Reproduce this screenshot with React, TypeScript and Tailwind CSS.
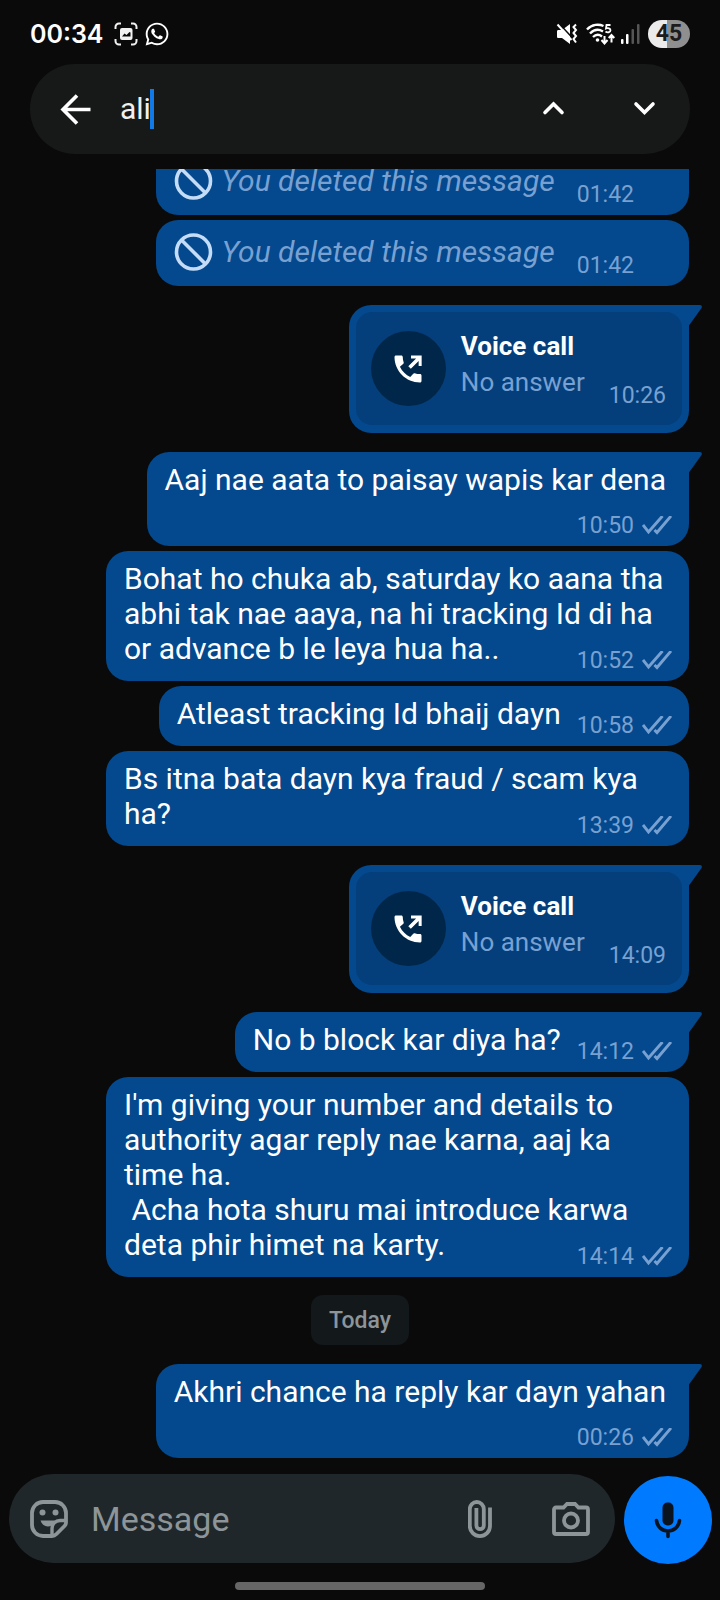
import { useState } from "react";
import { FaWhatsapp } from "react-icons/fa";

type Message =
  | { kind: "deleted"; time: string }
  | { kind: "call"; time: string; title: string; status: string }
  | { kind: "day"; label: string }
  | {
      kind: "text";
      time: string;
      text: string;
      meta: "inline" | "below" | "float";
      tail?: boolean;
    };

const messages: Message[] = [
  { kind: "deleted", time: "01:42" },
  { kind: "deleted", time: "01:42" },
  { kind: "call", title: "Voice call", status: "No answer", time: "10:26" },
  {
    kind: "text",
    text: "Aaj nae aata to paisay wapis kar dena",
    time: "10:50",
    meta: "below",
    tail: true,
  },
  {
    kind: "text",
    text: "Bohat ho chuka ab, saturday ko aana tha abhi tak nae aaya, na hi tracking Id di ha or advance b le leya hua ha..",
    time: "10:52",
    meta: "float",
  },
  {
    kind: "text",
    text: "Atleast tracking Id bhaij dayn",
    time: "10:58",
    meta: "inline",
  },
  {
    kind: "text",
    text: "Bs itna bata dayn kya fraud / scam kya ha?",
    time: "13:39",
    meta: "float",
  },
  { kind: "call", title: "Voice call", status: "No answer", time: "14:09" },
  {
    kind: "text",
    text: "No b block kar diya ha?",
    time: "14:12",
    meta: "inline",
    tail: true,
  },
  {
    kind: "text",
    text: "I'm giving your number and details to authority agar reply nae karna, aaj ka time ha.\n Acha hota shuru mai introduce karwa deta phir himet na karty.",
    time: "14:14",
    meta: "float",
  },
  { kind: "day", label: "Today" },
  {
    kind: "text",
    text: "Akhri chance ha reply kar dayn yahan",
    time: "00:26",
    meta: "below",
    tail: true,
  },
];

const metaClass = {
  inline: "ml-[10px]",
  below: "mt-[10px]",
  float: "float-right mt-[18px] -mr-[6px]",
};

const Tail = () => (
  <svg
    className="absolute top-0 -right-[13px] w-[14px] h-[21px]"
    viewBox="0 0 14 21"
    fill="#04488e"
  >
    <path d="M0 0H12c2 0 2.4 2 1.2 3.5L1 20.5V21H0z" />
  </svg>
);

const Meta = ({ msg }: { msg: Extract<Message, { kind: "text" }> }) => (
  <span
    className={`flex items-center self-end gap-2 text-[23px] leading-6 text-[#78a1d1] ${metaClass[msg.meta]}`}
  >
    <span>{msg.time}</span>
    <svg
      className="w-[30px] h-[20px]"
      viewBox="0 0 30 20"
      fill="none"
      stroke="#78a1d1"
      strokeWidth="2.9"
    >
      <path d="M1 9l5.500 7L20.500 0M12.500 14l2.500 2.500L29 0" />
    </svg>
  </span>
);

const Deleted = ({ time }: { time: string }) => (
  <div className="self-end flex items-end bg-[#04488e] rounded-[22px] pt-3 pb-2 pl-[18px] pr-[55px]">
    <div className="flex items-center h-[39px] mb-[7px] gap-[9px]">
      <svg
        className="w-[39px] h-[39px]"
        viewBox="0 0 39 39"
        fill="none"
        stroke="#c5dcf7"
        strokeWidth="3.600"
      >
        <circle cx="19.5" cy="20" r="17" />
        <path d="M7.500 8l24 24" />
      </svg>
      <p className="text-[30px] leading-[35px] italic text-[#78a1d1]">
        You deleted this message
      </p>
    </div>
    <span className="ml-[22px] text-[23px] leading-6 text-[#78a1d1]">
      {time}
    </span>
  </div>
);

const Call = ({
  title,
  status,
  time,
}: {
  title: string;
  status: string;
  time: string;
}) => (
  <div className="relative self-end mt-[14px] bg-[#04488e] rounded-[22px] rounded-tr-none p-[7px] pb-2">
    <Tail />
    <div className="flex items-start bg-[#043f7c] rounded-2xl h-[113px] pl-[15px] pr-4 pt-4">
      <div className="w-[75px] h-[75px] mt-[3px] rounded-full bg-[#00264a] flex items-center justify-center">
        <svg className="w-9 h-9" viewBox="0 0 24 24" fill="#fff">
          <path d="M20 15.400c-1.200 0-2.400-.2-3.500-.6-.4-.1-.8 0-1 .3l-2 2.300c-2.900-1.400-5.500-4-6.900-6.900l2.300-2c.3-.3.4-.7.2-1-.4-1.100-.6-2.300-.6-3.500 0-.6-.4-1-1-1H4c-.6 0-1 .4-1 1C3 13.300 10.700 21 20 21c.6 0 1-.4 1-1v-3.600c0-.6-.4-1-1-1z" />
          <path d="M14 3v2h3.400l-5.200 5.200 1.700 1.700 5.200-5.300V10h2V3z" />
        </svg>
      </div>
      <div className="ml-[15px]">
        <p className="text-[26px] leading-9 font-bold text-white">{title}</p>
        <p className="text-[26px] leading-9 text-[#78a1d1]">{status}</p>
      </div>
      <span className="ml-6 mt-14 text-[23px] leading-6 text-[#78a1d1]">
        {time}
      </span>
    </div>
  </div>
);

const Bubble = ({ msg }: { msg: Extract<Message, { kind: "text" }> }) => (
  <div
    className={`relative self-end flex max-w-[583px] bg-[#04488e] rounded-[22px] pt-[10px] pb-2 pl-[18px] pr-[17px] ${
      msg.meta === "inline" ? "items-end" : "flex-col"
    } ${msg.tail ? "mt-[14px] rounded-tr-none" : ""}`}
  >
    {msg.tail && <Tail />}
    <p
      className={`mr-[6px] text-[30px] leading-[35px] text-white whitespace-pre-wrap ${
        msg.meta === "float" ? "" : "mb-[7px]"
      }`}
    >
      {msg.text}
      {msg.meta === "float" && <Meta msg={msg} />}
    </p>
    {msg.meta !== "float" && <Meta msg={msg} />}
  </div>
);

const StatusBar = () => (
  <div className="flex items-center h-16 pt-[3px] px-[30px] text-white">
    <span className="font-[Inter,sans-serif] text-[25px] leading-8 font-semibold">
      00:34
    </span>
    <svg
      className="ml-[10px] w-6 h-6"
      viewBox="0 0 24 24"
      fill="none"
      stroke="#f2f2f2"
      strokeWidth="2"
    >
      <path d="M1.500 7V5a3.500 3.500 0 0 1 3.500-3.500h2M17 1.500h2A3.500 3.500 0 0 1 22.500 5v2M22.500 17v2a3.500 3.500 0 0 1-3.500 3.500h-2M7 22.500H5A3.500 3.500 0 0 1 1.500 19v-2" />
      <rect x="6" y="6" width="12.500" height="12" rx="2" fill="#f2f2f2" stroke="none" />
      <path
        d="M8 14.500l2.500-3 2 1.500 3-3 1 .5v4z"
        fill="#0a0a0a"
        stroke="none"
      />
    </svg>
    <FaWhatsapp className="ml-[6px] w-[26px] h-[26px]" />
    <div className="ml-auto flex items-center">
      {/* muted + vibrate */}
      <svg className="w-[22px] h-[22px]" viewBox="0 0 22 22" fill="none">
        <path d="M1 8.500C1 7.500 1.500 7 2.500 7H6l8-6v20l-8-6H2.500C1.500 15 1 14.500 1 13.500z" fill="#fff" />
        <path d="M3 .5l14 15" stroke="#0a0a0a" strokeWidth="1.600" />
        <path d="M1.500 1.500l14 15.500" stroke="#fff" strokeWidth="2" />
        <path d="M20 1.500l-2.500 2.500 2.500 3-2.500 3 2.500 3-2.500 3 2.500 3.500" stroke="#fff" strokeWidth="2" />
      </svg>
      {/* wifi */}
      <svg className="ml-2 w-[29px] h-[22px]" viewBox="0 0 29 22" fill="none" stroke="#fff">
        <path d="M1 6.500C6 1 13 1 17.500 3M4 10.500c4-4 9-4.500 13-2M7 14c2.500-2.500 6-3 9-.5" strokeWidth="2.400" />
        <circle cx="11.500" cy="17" r="1.800" fill="#fff" stroke="none" />
        <path d="M24.500 2h-4l-.5 3.500c2-.8 4.500-.3 4.500 1.800s-3 2.700-5 1.200" strokeWidth="1.800" />
        <path d="M18.500 13v7M15.500 17l3 3.500 3-3.500M25.500 19.500v-7M22.700 15l2.800-3 2.800 3" strokeWidth="2" />
      </svg>
      {/* signal */}
      <svg className="ml-[6px] w-[19px] h-[20px]" viewBox="0 0 19 20">
        <rect x="0" y="15" width="2.500" height="5" rx="1" fill="#fff" />
        <rect x="5" y="10" width="2.500" height="10" rx="1" fill="#fff" />
        <rect x="10.500" y="5" width="2.500" height="15" rx="1" fill="#555" />
        <rect x="16" y="0" width="2.500" height="20" rx="1" fill="#555" />
      </svg>
      <div className="ml-2 w-[42px] h-7 rounded-full bg-linear-to-r from-[#ebebeb] from-45% to-[#8f8f8f] to-45% flex items-center justify-center text-[23px] leading-7 font-bold text-[#1c1c1c]">
        45
      </div>
    </div>
  </div>
);

const SearchBar = () => {
  const [query, setQuery] = useState("ali");

  return (
    <div className="flex items-center h-[90px] mx-[30px] pl-[30px] pr-[34px] rounded-full bg-[#171918]">
      <button aria-label="Back">
        <svg className="w-8 h-8" viewBox="0 0 32 32" fill="none" stroke="#fff" strokeWidth="3.600">
          <path d="M17 2.500L3 16.500l14 14M3 16.500h27.500" />
        </svg>
      </button>
      <div className="ml-7 flex flex-1 items-center">
        <input
          aria-label="Search"
          className="field-sizing-content text-[30px] leading-10 text-[#f0f0f0] outline-none bg-transparent"
          value={query}
          onChange={(e) => setQuery(e.target.value)}
        />
        <span className="-ml-px w-1 h-10 bg-[#1279e8]" />
      </div>
      <button aria-label="Previous result">
        <svg className="w-6 h-6" viewBox="0 0 24 24" fill="none" stroke="#fff" strokeWidth="3.600" strokeLinecap="round">
          <path d="M4 15.500L12.500 7l8.500 8.500" />
        </svg>
      </button>
      <button aria-label="Next result" className="ml-[67px]">
        <svg className="w-6 h-6" viewBox="0 0 24 24" fill="none" stroke="#fff" strokeWidth="3.600" strokeLinecap="round">
          <path d="M4 7l8.500 8.500L21 7" />
        </svg>
      </button>
    </div>
  );
};

const Composer = () => (
  <div className="flex items-center gap-[9px] pl-[9px] pr-2">
    <div className="flex flex-1 min-w-0 items-center h-[89px] rounded-full bg-[#20272b] pl-[21px] pr-[25px]">
      <button aria-label="Stickers">
        <svg className="w-[38px] h-[38px]" viewBox="0 0 38 38" fill="none" stroke="#8d9598" strokeWidth="3.800">
          <path d="M13 2h12a11 11 0 0 1 11 11v9.500c0 1.500-.5 2.500-1.500 3.500l-8 8c-1.200 1.200-2.500 2-4.500 2h-9A11 11 0 0 1 2 25V13A11 11 0 0 1 13 2z" />
          <path d="M36 20.500h-6a8 8 0 0 0-8 8V36" strokeWidth="3.400" />
          <circle cx="12.500" cy="12.500" r="3" fill="#8d9598" stroke="none" />
          <circle cx="25.500" cy="12.500" r="3" fill="#8d9598" stroke="none" />
          <path d="M10.500 20.500h15c-1.500 4-4 6-7.500 6s-6-2-7.500-6z" fill="#8d9598" stroke="none" />
        </svg>
      </button>
      <input
        aria-label="Message"
        placeholder="Message"
        className="ml-[23px] flex-1 min-w-0 text-[34px] leading-10 text-white placeholder:text-[#8d9598] outline-none bg-transparent"
      />
      <button aria-label="Attach">
        <svg className="w-6 h-[38px]" viewBox="0 0 24 38" fill="none" stroke="#8d9598" strokeWidth="3.800">
          <path d="M22 7.500V26a10.100 10.100 0 0 1-20.200 0V9a7 7 0 0 1 14 0v16.500a3.700 3.700 0 0 1-7.400 0V8" />
        </svg>
      </button>
      <button aria-label="Camera" className="ml-[60px]">
        <svg className="w-[38px] h-[34px]" viewBox="0 0 38 34" fill="none" stroke="#8d9598" strokeWidth="3.800">
          <path d="M4 5.500h7.500L15 2h8l3.500 3.500H34a2 2 0 0 1 2 2V30a2 2 0 0 1-2 2H4a2 2 0 0 1-2-2V7.500a2 2 0 0 1 2-2z" />
          <circle cx="19" cy="18.500" r="7" />
        </svg>
      </button>
    </div>
    <button
      aria-label="Record voice message"
      className="w-[88px] h-[88px] mt-[3px] shrink-0 rounded-full bg-[#007bff] flex items-center justify-center"
    >
      <svg className="w-7 h-[37px]" viewBox="0 0 28 37" fill="none" stroke="#0a1420" strokeWidth="3.600" strokeLinecap="round">
        <rect x="8.500" y="0.500" width="11" height="23" rx="5" fill="#0a1420" stroke="none" />
        <path d="M2.500 18.500c.8 6.500 5.500 10.500 11.500 10.500s10.700-4 11.500-10.500M14 29v5.500" />
      </svg>
    </button>
  </div>
);

const App = () => {
  return (
    <div className="min-h-screen flex flex-col bg-[#0a0a0a] font-[Roboto,sans-serif]">
      <StatusBar />
      <SearchBar />
      <main className="flex-1 mt-[15px] mb-3 overflow-hidden">
        <div className="-mt-5 flex flex-col gap-[5px] pr-[31px]">
          {messages.map((msg, i) => {
            if (msg.kind === "deleted") return <Deleted key={i} time={msg.time} />;
            if (msg.kind === "call") return <Call key={i} {...msg} />;
            if (msg.kind === "day")
              return (
                <div key={i} className="flex justify-center mt-[13px] -mr-[31px]">
                  <span className="rounded-xl bg-[#13181b] px-[18px] pt-[14px] pb-3 text-[23px] leading-6 font-medium text-[#8d9598]">
                    {msg.label}
                  </span>
                </div>
              );
            return <Bubble key={i} msg={msg} />;
          })}
        </div>
      </main>
      <Composer />
      <div className="mt-[18px] mb-[10px] mx-auto w-[250px] h-2 rounded-full bg-[#666]" />
    </div>
  );
};

export default App;
